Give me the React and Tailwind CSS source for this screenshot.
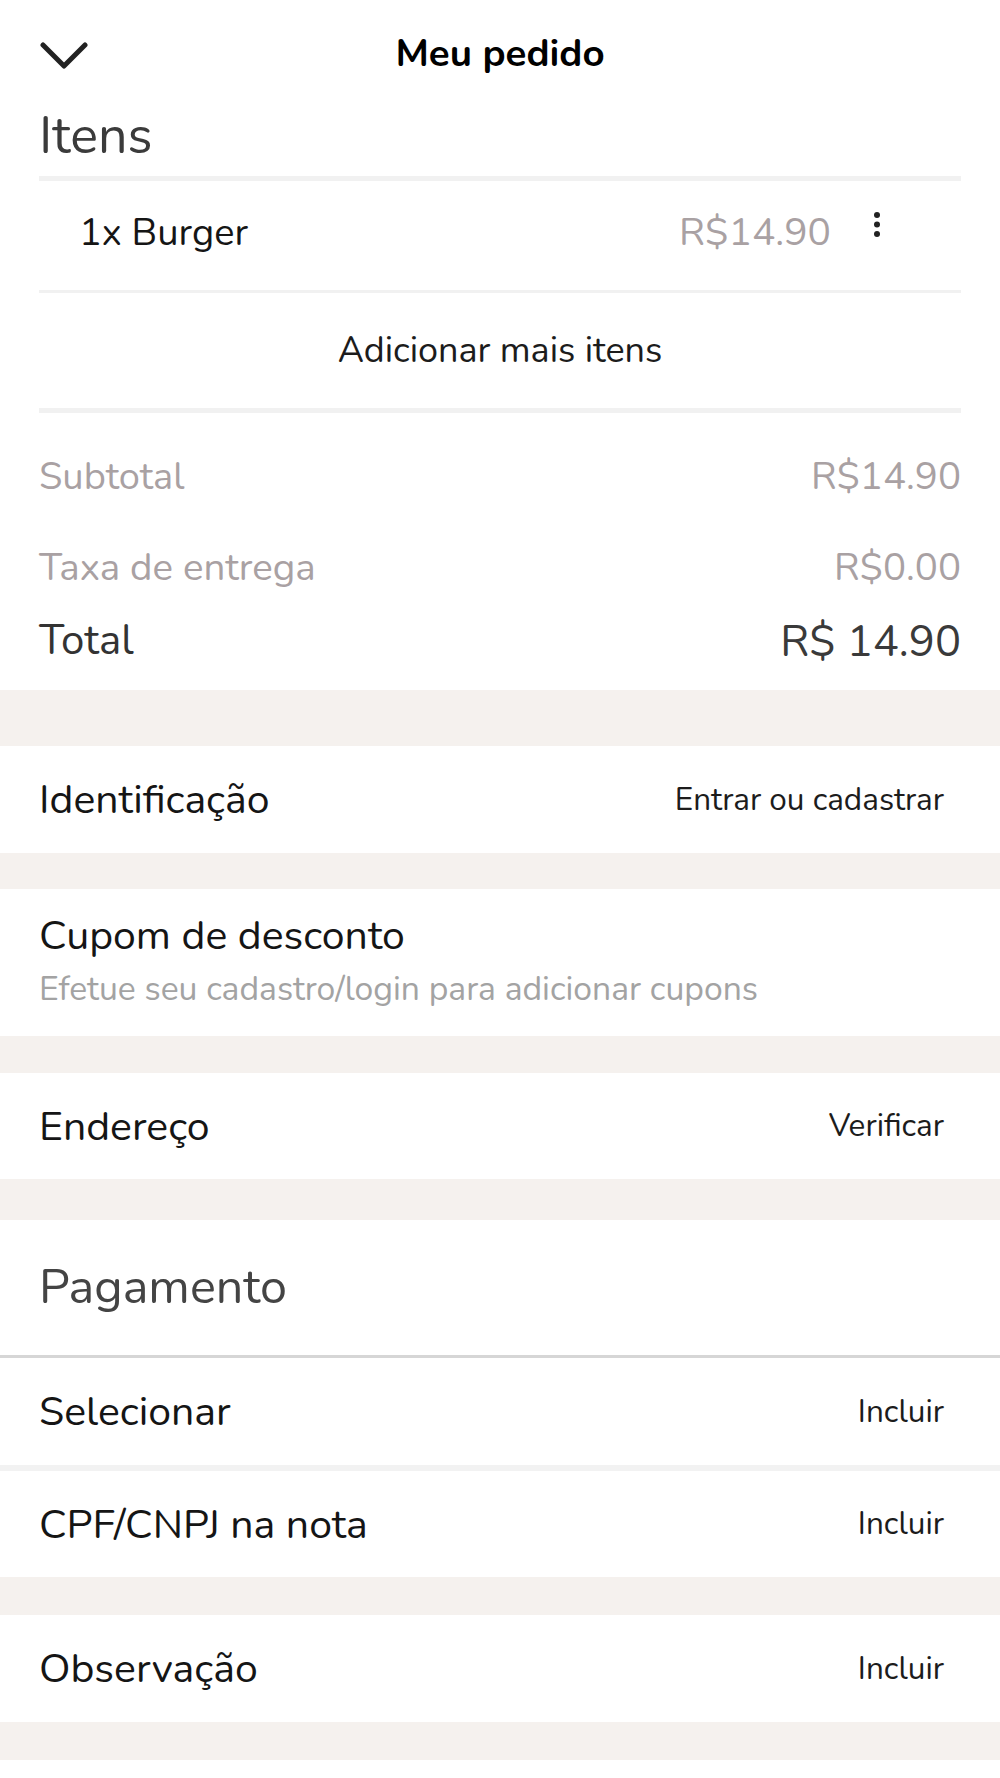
import React from "react";

function Band({ h }) {
  return <div className={`w-full bg-[#f5f1ee] ${h}`} />;
}

function Row({ label, action, h = "h-[107px]" }) {
  return (
    <div className={`flex ${h} items-center justify-between bg-white pl-[39px] pr-[56px]`}>
      <span className="text-[41px] leading-none text-[#151515]">{label}</span>
      {action && <span className="text-[31.5px] leading-none text-[#1c1c1c]">{action}</span>}
    </div>
  );
}

export default function App() {
  return (
    <div
      className="w-[1000px] min-h-[1778px] bg-white"
      style={{ fontFamily: "'Nunito', 'Lato', 'Open Sans', sans-serif" }}
    >
      {/* Header */}
      <div className="relative flex h-[108px] items-center justify-center">
        <svg
          className="absolute left-[40px] top-[41px]"
          width="48"
          height="28"
          viewBox="0 0 48 28"
          fill="none"
        >
          <polyline
            points="3,4 24,25 45,4"
            stroke="#222"
            strokeWidth="5"
            strokeLinecap="round"
            strokeLinejoin="round"
          />
        </svg>
        <span className="text-[38.5px] font-bold leading-none text-black">Meu pedido</span>
      </div>

      {/* Itens section */}
      <div className="px-[39px]">
        <div className="flex h-[68px] items-start pt-[2px]">
          <span className="text-[52px] leading-none text-[#3b3b3b]">Itens</span>
        </div>
        <div className="h-[5px] bg-[#f1f1f1]" />
        <div className="flex h-[109px] items-center pb-[6px] pl-[40px] pr-[80px]">
          <span className="flex-1 text-[38px] leading-none text-[#151515]">1x Burger</span>
          <span className="text-[39px] leading-none text-[#a9a1a3]">R$14.90</span>
          <svg className="ml-[42px] -mt-[16px]" width="8" height="26" viewBox="0 0 8 26">
            <circle cx="4" cy="3" r="3" fill="#222" />
            <circle cx="4" cy="12.5" r="3" fill="#222" />
            <circle cx="4" cy="22" r="3" fill="#222" />
          </svg>
        </div>
        <div className="h-[3px] bg-[#f1f1f1]" />
        <div className="flex h-[115px] items-center justify-center">
          <span className="text-[36px] leading-none text-[#1c1c1c]">Adicionar mais itens</span>
        </div>
        <div className="h-[5px] bg-[#f1f1f1]" />

        <div className="flex h-[128px] items-center justify-between">
          <span className="text-[38px] leading-none text-[#a9a1a3]">Subtotal</span>
          <span className="text-[38.5px] leading-none text-[#a9a1a3]">R$14.90</span>
        </div>
        <div className="flex h-[54px] items-center justify-between">
          <span className="text-[38.5px] leading-none text-[#a9a1a3]">Taxa de entrega</span>
          <span className="text-[38.5px] leading-none text-[#a9a1a3]">R$0.00</span>
        </div>
        <div className="flex h-[95px] items-start justify-between pt-[25px]">
          <span className="text-[42px] leading-none text-[#333333]">Total</span>
          <span className="text-[43.5px] leading-none text-[#3a3a3a]">R$ 14.90</span>
        </div>
      </div>

      <Band h="h-[56px]" />
      <Row label="Identificação" action="Entrar ou cadastrar" />
      <Band h="h-[36px]" />
      <div className="flex h-[147px] flex-col items-start gap-[17px] bg-white pl-[39px] pr-[56px] pt-[26px]">
        <span className="text-[41px] leading-none text-[#151515]">Cupom de desconto</span>
        <span className="text-[33.7px] leading-none text-[#a3a3a3]">
          Efetue seu cadastro/login para adicionar cupons
        </span>
      </div>
      <Band h="h-[37px]" />
      <Row label="Endereço" action="Verificar" h="h-[106px]" />
      <Band h="h-[41px]" />
      <div className="flex h-[135px] items-center bg-white pl-[39px]">
        <span className="text-[48.5px] leading-none text-[#444444]">Pagamento</span>
      </div>
      <div className="h-[3px] bg-[#d6d6d6]" />
      <Row label="Selecionar" action="Incluir" />
      <div className="h-[6px] bg-[#f2f2f2]" />
      <Row label="CPF/CNPJ na nota" action="Incluir" h="h-[106px]" />
      <Band h="h-[38px]" />
      <Row label="Observação" action="Incluir" />
      <Band h="h-[38px]" />
      <div className="h-[20px] bg-white" />
    </div>
  );
}
